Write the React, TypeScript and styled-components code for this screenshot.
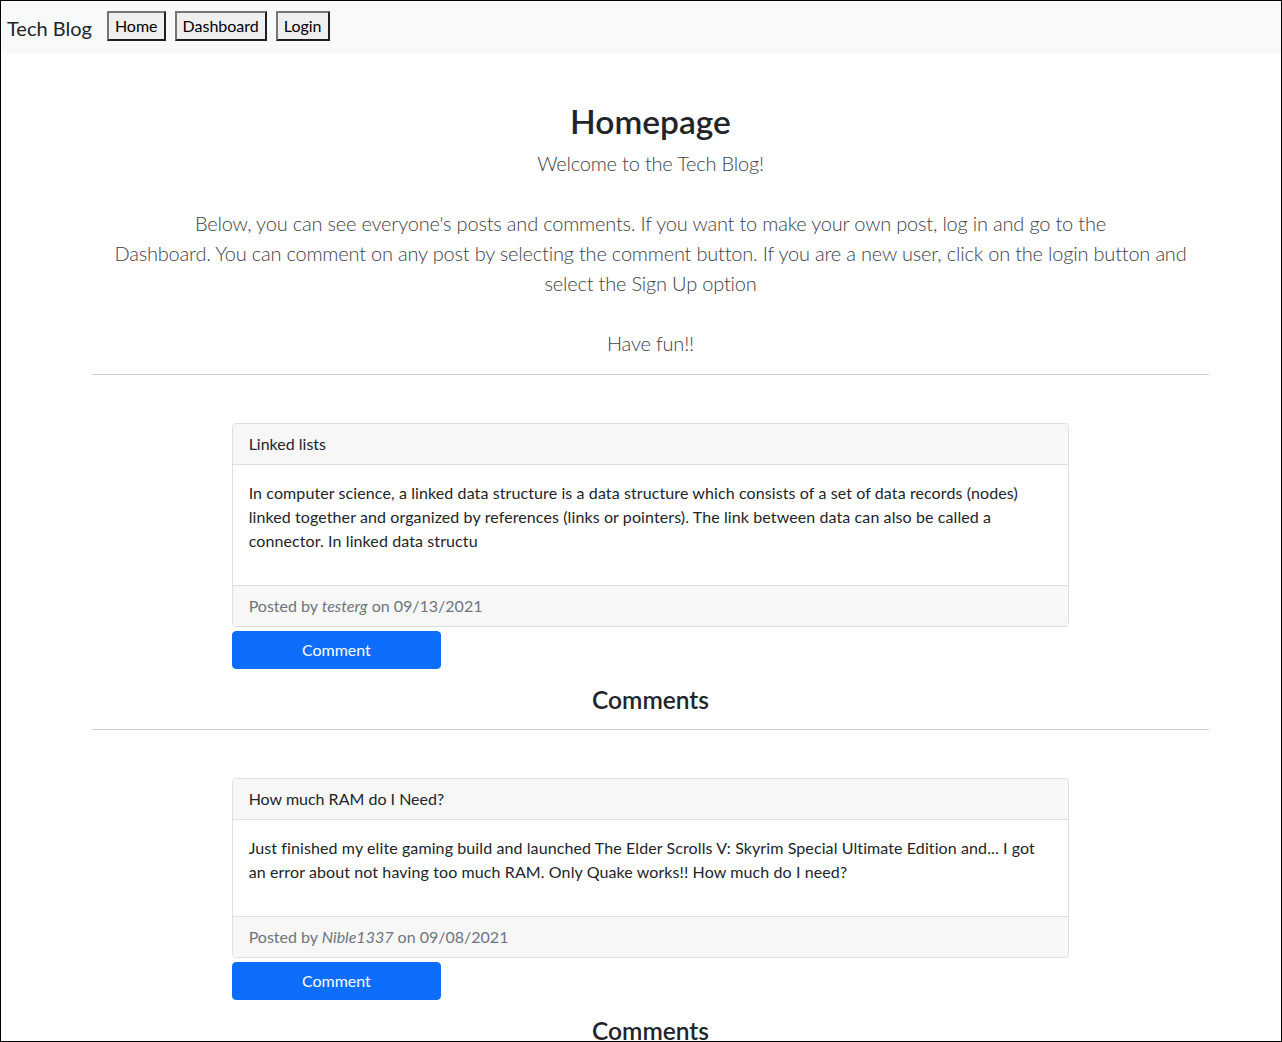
import React from "react";
import styled, { createGlobalStyle } from "styled-components";

const GlobalStyle = createGlobalStyle`
  html, body {
    margin: 0;
    padding: 0;
  }
  body {
    font-family: "Segoe UI", Lato, "Noto Sans", sans-serif;
    font-size: 16px;
    line-height: 1.5;
    color: #212529;
    background: #fff;
  }
  * {
    box-sizing: border-box;
  }
`;

const Frame = styled.div`
  height: 100vh;
  border: 1px solid #000;
  overflow: hidden;
`;

const Navbar = styled.nav`
  display: flex;
  align-items: center;
  height: 52px;
  padding: 0 6px 2px;
  background: #f8f9fa;
`;

const Brand = styled.span`
  font-size: 20px;
  margin-right: 15px;
  padding-top: 4px;
`;

const NavButton = styled.button`
  font-family: inherit;
  font-size: 16px;
  line-height: 24px;
  padding: 1px 6px;
  margin-right: 9px;
  color: #000;
  background: #efefef;
  border: 2px solid;
  border-color: #767676 #1e1e1e #1e1e1e #767676;
`;

const Main = styled.main`
  padding: 0 72px 0 91px;
`;

const Hero = styled.header`
  padding-top: 48px;
  text-align: center;
`;

const Title = styled.h1`
  font-size: 33.5px;
  font-weight: 600;
  line-height: 40px;
  margin: 0 0 7px;
`;

const Lead = styled.p`
  font-size: 20px;
  font-weight: 300;
  line-height: 30px;
  letter-spacing: -0.2px;
  margin: 0 0 16px;
  color: #3d4247;
`;

const Divider = styled.hr`
  margin: 0;
  border: 0;
  border-top: 1px solid #c8c9ca;
`;

const PostBlock = styled.section`
  padding-top: 48px;
`;

const Column = styled.div`
  width: 75%;
  margin: 0 auto;
`;

const Card = styled.article`
  border: 1px solid #dfdfdf;
  border-radius: 4px;
  overflow: hidden;
`;

const CardHeader = styled.div`
  padding: 8px 16px;
  background: #f7f7f7;
  border-bottom: 1px solid #dfdfdf;
`;

const CardBody = styled.div`
  padding: 16px;
  letter-spacing: 0.1px;

  p {
    margin: 0 0 16px;
  }
`;

const CardFooter = styled.div`
  padding: 8px 16px;
  background: #f7f7f7;
  border-top: 1px solid #dfdfdf;
  color: #6c757d;

  em {
    font-style: italic;
  }
`;

const CommentButton = styled.button`
  display: block;
  width: 25%;
  margin-top: 4px;
  padding: 6px 12px;
  font-family: inherit;
  font-size: 16px;
  line-height: 24px;
  color: #fff;
  background: #0d6efd;
  border: 1px solid #0d6efd;
  border-radius: 4px;
  cursor: pointer;
`;

const CommentsTitle = styled.h3`
  font-size: 24.5px;
  font-weight: 600;
  line-height: 1.2;
  text-align: center;
  margin: 16px 0 15px;
`;

type Post = {
  title: string;
  body: string;
  author: string;
  date: string;
};

const posts: Post[] = [
  {
    title: "Linked lists",
    body: "In computer science, a linked data structure is a data structure which consists of a set of data records (nodes) linked together and organized by references (links or pointers). The link between data can also be called a connector. In linked data structu",
    author: "testerg",
    date: "09/13/2021",
  },
  {
    title: "How much RAM do I Need?",
    body: "Just finished my elite gaming build and launched The Elder Scrolls V: Skyrim Special Ultimate Edition and... I got an error about not having too much RAM. Only Quake works!! How much do I need?",
    author: "Nible1337",
    date: "09/08/2021",
  },
];

const PostItem: React.FC<{ post: Post }> = ({ post }) => (
  <PostBlock>
    <Column>
      <Card>
        <CardHeader>{post.title}</CardHeader>
        <CardBody>
          <p>{post.body}</p>
        </CardBody>
        <CardFooter>
          Posted by <em>{post.author}</em> on {post.date}
        </CardFooter>
      </Card>
      <CommentButton>Comment</CommentButton>
    </Column>
    <CommentsTitle>Comments</CommentsTitle>
    <Divider />
  </PostBlock>
);

const App: React.FC = () => {
  return (
    <>
      <GlobalStyle />
      <Frame>
        <Navbar>
          <Brand>Tech Blog</Brand>
          <NavButton>Home</NavButton>
          <NavButton>Dashboard</NavButton>
          <NavButton>Login</NavButton>
        </Navbar>
        <Main>
          <Hero>
            <Title>Homepage</Title>
            <Lead>
              Welcome to the Tech Blog!
              <br />
              <br />
              Below, you can see everyone's posts and comments. If you want to make your own post, log in and go to the
              <br />
              Dashboard. You can comment on any post by selecting the comment button. If you are a new user, click on the login button and
              <br />
              select the Sign Up option
              <br />
              <br />
              Have fun!!
            </Lead>
          </Hero>
          <Divider />
          {posts.map((post) => (
            <PostItem key={post.title} post={post} />
          ))}
        </Main>
      </Frame>
    </>
  );
};

export default App;
